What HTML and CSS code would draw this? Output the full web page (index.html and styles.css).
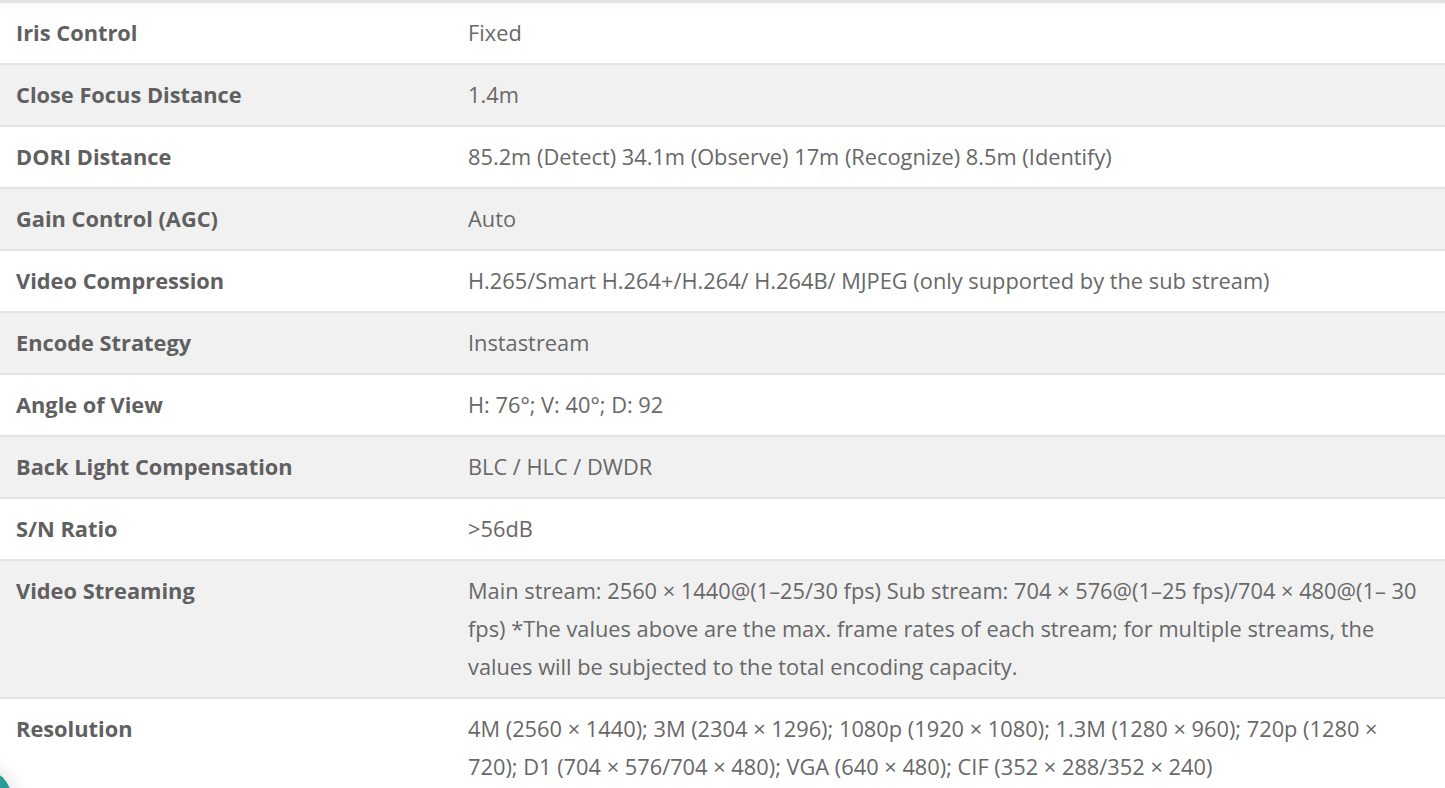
FILE: index.html
```html
<!DOCTYPE html>
<html lang="en">
<head>
<meta charset="utf-8">
<title>Specifications</title>
<link rel="stylesheet" href="styles.css">
</head>
<body>
<div class="topbar"></div>
<table class="specs">
  <tbody>
    <tr><th>Iris Control</th><td>Fixed</td></tr>
    <tr><th>Close Focus Distance</th><td>1.4m</td></tr>
    <tr><th>DORI Distance</th><td>85.2m (Detect) 34.1m (Observe) 17m (Recognize) 8.5m (Identify)</td></tr>
    <tr><th>Gain Control (AGC)</th><td>Auto</td></tr>
    <tr><th>Video Compression</th><td>H.265/Smart H.264+/H.264/ H.264B/ MJPEG (only supported by the sub stream)</td></tr>
    <tr><th>Encode Strategy</th><td>Instastream</td></tr>
    <tr><th>Angle of View</th><td>H: 76°; V: 40°; D: 92</td></tr>
    <tr><th>Back Light Compensation</th><td>BLC / HLC / DWDR</td></tr>
    <tr><th>S/N Ratio</th><td>&gt;56dB</td></tr>
    <tr><th>Video Streaming</th><td>Main stream: 2560 × 1440@(1–25/30 fps) Sub stream: 704 × 576@(1–25 fps)/704 × 480@(1– 30 fps) *The values above are the max. frame rates of each stream; for multiple streams, the values will be subjected to the total encoding capacity.</td></tr>
    <tr><th>Resolution</th><td>4M (2560 × 1440); 3M (2304 × 1296); 1080p (1920 × 1080); 1.3M (1280 × 960); 720p (1280 × 720); D1 (704 × 576/704 × 480); VGA (640 × 480); CIF (352 × 288/352 × 240)</td></tr>
  </tbody>
</table>
<div class="chat-bubble"></div>
</body>
</html>
```
FILE: styles.css
```css
html, body {
  margin: 0;
  padding: 0;
  background: #ffffff;
  overflow: hidden;
}
body {
  font-family: "Open Sans", "Liberation Sans", sans-serif;
  font-size: 21.8px;
  color: #666666;
}
.topbar {
  height: 3px;
  background: #e2e2e4;
  box-shadow: 0 2px 6px rgba(0,0,0,0.06);
  position: relative;
}
.specs {
  width: 100%;
  border-collapse: collapse;
}
.specs th,
.specs td {
  text-align: left;
  vertical-align: top;
  padding: 11px 16px;
  line-height: 38px;
  border-bottom: 2px solid #e4e4e6;
}
.specs th {
  width: 420px;
  font-weight: 700;
  color: #606060;
}
.specs td {
  font-weight: 400;
  color: #686868;
}
.specs tr:nth-child(even) {
  background: #f1f1f1;
}
.chat-bubble {
  position: fixed;
  left: -52px;
  bottom: -44px;
  width: 64px;
  height: 64px;
  border-radius: 50%;
  background: #2a9c98;
  box-shadow: 0 0 14px 6px rgba(0,0,0,0.08);
}
```
